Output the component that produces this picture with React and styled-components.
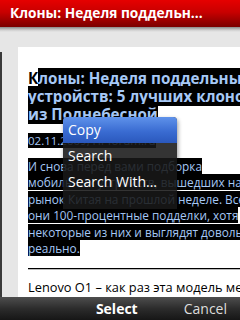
import React from "react";
import styled, { createGlobalStyle } from "styled-components";

const GlobalStyle = createGlobalStyle`
  html, body {
    margin: 0;
    padding: 0;
    width: 240px;
    height: 320px;
    overflow: hidden;
    font-family: "Open Sans", "DejaVu Sans", sans-serif;
  }
`;

function App() {
  return (
    <Screen>
      <GlobalStyle />
      <TitleBar>Клоны: Неделя поддельн...</TitleBar>
      <Main>
        <LeftRail />
        <Page>
          <Article>
            <Heading>
              К<Sel>лоны: Неделя поддельных<br />устройств: 5 лучших клонов<br />из Поднебесной</Sel>
            </Heading>
            <DateLine>
              <Sel>02.11.2009, Hi-forum.ru</Sel>
            </DateLine>
            <Para>
              <Sel>
                И снова перед вами подборка<br />
                мобильных устройств, вышедших на<br />
                рынок Китая на прошлой неделе. Все<br />
                они 100-процентные подделки, хотя<br />
                некоторые из них и выглядят довольно<br />
                реально.
              </Sel>
            </Para>
            <Rule />
            <BodyText>
              Le<LinkMark>novo O1 –</LinkMark> как раз эта модель меньше всего
            </BodyText>
          </Article>
          <ScrollThumb />
        </Page>
        <ContextMenu>
          <MenuItem active>Copy</MenuItem>
          <MenuItem>Search</MenuItem>
          <MenuItem>Search With...</MenuItem>
        </ContextMenu>
      </Main>
      <SoftKeys>
        <SoftKey bold>Select</SoftKey>
        <SoftKey>Cancel</SoftKey>
      </SoftKeys>
    </Screen>
  );
}

const Screen = styled.div`
  width: 240px;
  height: 320px;
  display: flex;
  flex-direction: column;
  overflow: hidden;
  background: #e6e6e6;
`;
const TitleBar = styled.div`
  height: 27px;
  flex-shrink: 0;
  box-sizing: border-box;
  padding: 4px 0 0 10px;
  background: linear-gradient(#e60000, #c80000 45%, #7a0000);
  color: #fff;
  font-weight: 700;
  font-size: 13.7px;
  line-height: 18px;
  white-space: nowrap;
`;
const Main = styled.div`
  position: relative;
  flex: 1;
  display: flex;
  min-height: 0;
  padding-top: 20px;
  background: linear-gradient(#8a8a8a, #cfcfcf 3px, #e6e6e6 5px);
`;
const LeftRail = styled.div`
  width: 16px;
  flex-shrink: 0;
  margin-top: 5px;
  border-left: 2px solid #3a3a3a;
`;
const Page = styled.div`
  flex: 1;
  display: flex;
  background: #fff;
  overflow: hidden;
`;
const Article = styled.div`
  flex: 1;
  padding: 22px 0 0 10px;
  white-space: nowrap;
  color: #000;
`;
const ScrollThumb = styled.div`
  width: 4px;
  height: 10px;
  margin-top: 8px;
  flex-shrink: 0;
  background: #666;
`;
const Sel = styled.span`
  background: #000;
  color: #a6c8f6;
`;
const Heading = styled.div`
  font-weight: 700;
  font-size: 15.2px;
  line-height: 18px;
`;
const DateLine = styled.div`
  margin-top: 10px;
  font-size: 11.5px;
  line-height: 16px;
`;
const Para = styled.div`
  margin-top: 9px;
  font-size: 11.8px;
  line-height: 16.4px;
`;
const Rule = styled.div`
  margin-top: 12px;
  height: 1px;
  background: #000;
  border-bottom: 1px solid #bbb;
`;
const BodyText = styled.div`
  margin-top: 8px;
  font-size: 12.8px;
  line-height: 18px;
`;
const LinkMark = styled.span`
  text-decoration: underline;
  text-decoration-color: #666;
  text-decoration-thickness: 2px;
  text-underline-offset: 5px;
`;
const ContextMenu = styled.div`
  position: absolute;
  left: 63px;
  top: 90px;
  width: 114px;
  height: 92px;
  border-radius: 4px 4px 0 0;
  background: rgba(24, 24, 24, 0.88);
  box-shadow: 1px 2px 4px rgba(0, 0, 0, 0.4);
  overflow: hidden;
`;
const MenuItem = styled.div`
  height: 26px;
  line-height: 26px;
  padding-left: 5px;
  font-size: 14px;
  color: #fff;
  background: ${(p) => (p.active ? "linear-gradient(#5f92ea, #3a6cd2 55%, #2a58bd)" : "transparent")};
`;
const SoftKeys = styled.div`
  height: 23px;
  flex-shrink: 0;
  display: flex;
  justify-content: flex-end;
  align-items: center;
  gap: 46px;
  padding-right: 13px;
  background: linear-gradient(#4e4e4e, #2c2c2c 50%, #161616);
`;
const SoftKey = styled.span`
  font-size: 14px;
  font-weight: ${(p) => (p.bold ? 700 : 400)};
  color: ${(p) => (p.bold ? "#fff" : "#ddd")};
`;

export default App;
